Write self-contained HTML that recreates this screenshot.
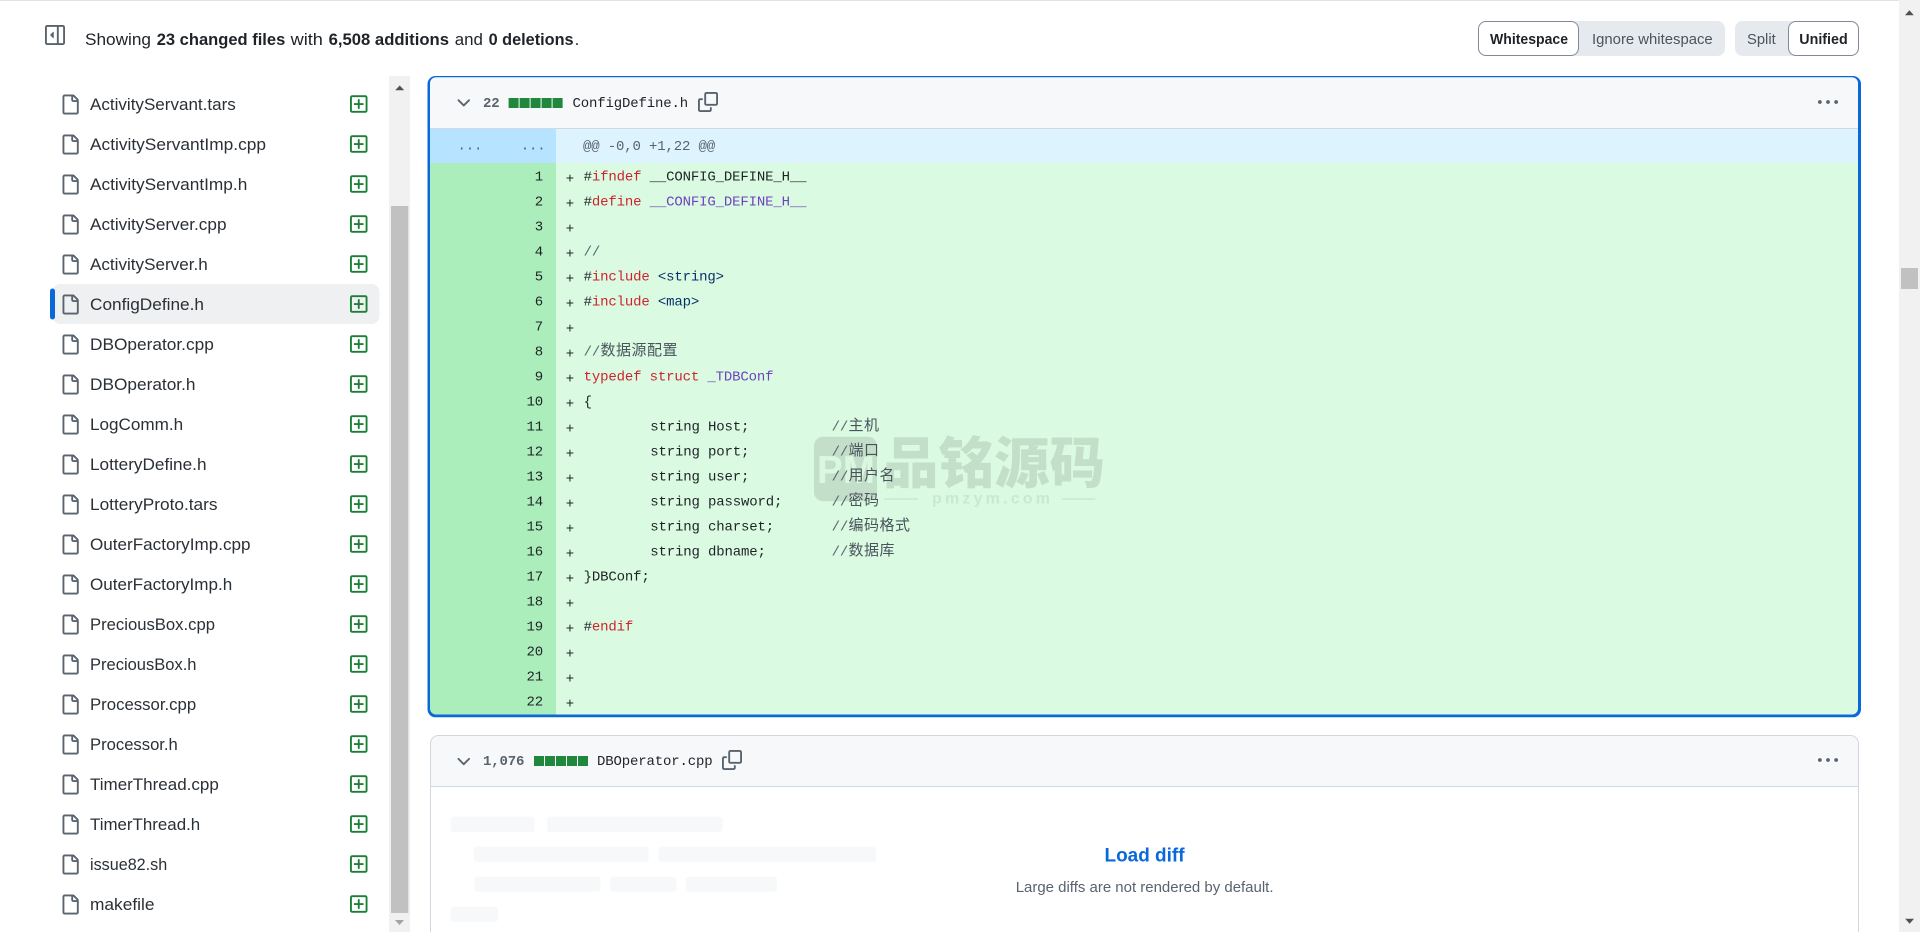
<!DOCTYPE html>
<html lang="en">
<head>
<meta charset="utf-8">
<title>Files changed</title>
<style>
html,body{margin:0;padding:0;background:#fff;overflow:hidden;width:1920px;height:932px}
svg{display:block;position:absolute;left:0;top:0}
.s{font-family:"Liberation Sans",sans-serif}
.f{font-size:17px;fill:#2a3036;transform:translate(-.5px,-1px)}
.h{font-size:17px;fill:#1f2328}
.b{font-weight:700}
.bt{font-size:15px;fill:#4b535d}
.m{font-family:"Liberation Mono",monospace;font-size:14px;letter-spacing:-.15px;fill:#1f2328;white-space:pre;transform:translateY(-1.5px)}
.n{text-anchor:end}
.r{fill:#cf222e}.p{fill:#6f42c1}.g{fill:#59636e}.v{fill:#0a3069}
.c{font-family:"Liberation Sans","Noto Sans CJK SC",sans-serif;font-size:15px;letter-spacing:.5px;fill:#4a535d;transform:translateY(-1px)}
</style>
</head>
<body>
<svg width="1920" height="932" viewBox="0 0 1920 932" xmlns="http://www.w3.org/2000/svg">
<defs>
<g id="file"><path fill="#59636e" transform="scale(1.25)" d="M2 1.75C2 .784 2.784 0 3.75 0h6.586c.464 0 .909.184 1.237.513l2.914 2.914c.329.328.513.773.513 1.237v9.586A1.75 1.75 0 0 1 13.25 16h-9.5A1.75 1.75 0 0 1 2 14.25Zm1.75-.25a.25.25 0 0 0-.25.25v12.5c0 .138.112.25.25.25h9.5a.25.25 0 0 0 .25-.25V6h-2.75A1.75 1.75 0 0 1 9 4.25V1.5Zm6.75.062V4.25c0 .138.112.25.25.25h2.688l-.011-.013-2.914-2.914-.013-.011Z"/></g>
<g id="add"><path fill="#1a7f37" transform="scale(1.25)" d="M2.75 1h10.5c.966 0 1.75.784 1.75 1.75v10.5A1.75 1.75 0 0 1 13.25 15H2.75A1.75 1.75 0 0 1 1 13.25V2.75C1 1.784 1.784 1 2.75 1Zm10.5 1.5H2.75a.25.25 0 0 0-.25.25v10.5c0 .138.112.25.25.25h10.5a.25.25 0 0 0 .25-.25V2.75a.25.25 0 0 0-.25-.25ZM8 4a.75.75 0 0 1 .75.75v2.5h2.5a.75.75 0 0 1 0 1.5h-2.5v2.5a.75.75 0 0 1-1.5 0v-2.5h-2.5a.75.75 0 0 1 0-1.5h2.5v-2.5A.75.75 0 0 1 8 4Z"/></g>
<g id="copy" fill="#59636e" transform="scale(1.25)"><path d="M0 6.75C0 5.784.784 5 1.75 5h1.5a.75.75 0 0 1 0 1.5h-1.5a.25.25 0 0 0-.25.25v7.5c0 .138.112.25.25.25h7.5a.25.25 0 0 0 .25-.25v-1.5a.75.75 0 0 1 1.5 0v1.5A1.75 1.75 0 0 1 9.25 16h-7.5A1.75 1.75 0 0 1 0 14.25Z"/><path d="M5 1.75C5 .784 5.784 0 6.75 0h7.5C15.216 0 16 .784 16 1.75v7.5A1.75 1.75 0 0 1 14.25 11h-7.5A1.75 1.75 0 0 1 5 9.25Zm1.75-.25a.25.25 0 0 0-.25.25v7.5c0 .138.112.25.25.25h7.5a.25.25 0 0 0 .25-.25v-7.5a.25.25 0 0 0-.25-.25Z"/></g>
<g id="chev"><path fill="#59636e" transform="scale(1.25)" d="M12.78 5.22a.749.749 0 0 1 0 1.06l-4.25 4.25a.749.749 0 0 1-1.06 0L3.22 6.28a.749.749 0 1 1 1.06-1.06L8 8.939l3.72-3.719a.749.749 0 0 1 1.06 0Z"/></g>
<g id="keb"><path fill="#59636e" transform="scale(1.25)" d="M8 9a1.5 1.5 0 1 0 0-3 1.5 1.5 0 0 0 0 3ZM1.5 9a1.5 1.5 0 1 0 0-3 1.5 1.5 0 0 0 0 3Zm13 0a1.5 1.5 0 1 0 0-3 1.5 1.5 0 0 0 0 3Z"/></g>
<g id="sq" fill="#1f883d"><rect x="0" width="10" height="10"/><rect x="11" width="10" height="10"/><rect x="22" width="10" height="10"/><rect x="33" width="10" height="10"/><rect x="44" width="10" height="10"/></g>
<clipPath id="inner"><path d="M436 77.3H1852a6 6 0 0 1 6 6V708.5a6 6 0 0 1-6 6H436a6 6 0 0 1-6-6V83.3a6 6 0 0 1 6-6Z"/></clipPath>
</defs>

<rect width="1920" height="932" fill="#fff"/>
<rect width="1920" height="1" fill="#e0e2e5"/>

<!-- toolbar -->
<g transform="translate(45 25)"><path fill="#59636e" transform="scale(1.25)" d="m4.177 7.823 2.396-2.396A.25.25 0 0 1 7 5.604v4.792a.25.25 0 0 1-.427.177L4.177 8.177a.25.25 0 0 1 0-.354ZM1.75 0h12.5C15.216 0 16 .784 16 1.75v12.5A1.75 1.75 0 0 1 14.25 16H1.75A1.75 1.75 0 0 1 0 14.25V1.75C0 .784.784 0 1.75 0ZM1.5 1.75v12.5c0 .138.112.25.25.25H9.5v-13H1.75a.25.25 0 0 0-.25.25ZM11 14.5h3.25a.25.25 0 0 0 .25-.25V1.75a.25.25 0 0 0-.25-.25H11Z"/></g>
<g class="s h">
<text class="s h" x="85" y="45" textLength="66" lengthAdjust="spacingAndGlyphs">Showing</text>
<text class="s h b" x="156.7" y="45" textLength="128.6" lengthAdjust="spacingAndGlyphs">23 changed files</text>
<text class="s h" x="290.6" y="45" textLength="32.3" lengthAdjust="spacingAndGlyphs">with</text>
<text class="s h b" x="328.6" y="45" textLength="120.4" lengthAdjust="spacingAndGlyphs">6,508 additions</text>
<text class="s h" x="454.7" y="45" textLength="28.2" lengthAdjust="spacingAndGlyphs">and</text>
<text class="s h b" x="488.6" y="45" textLength="85" lengthAdjust="spacingAndGlyphs">0 deletions</text>
<text class="s h" x="574.6" y="45">.</text>
</g>

<rect x="1478" y="21" width="247" height="35" rx="7.5" fill="#e6eaef"/>
<rect x="1478.5" y="21.5" width="100" height="34" rx="7.5" fill="#fff" stroke="#818b98"/>
<text class="s bt b" style="fill:#1f2328" x="1490" y="44" textLength="78" lengthAdjust="spacingAndGlyphs">Whitespace</text>
<text class="s bt" x="1592" y="44" textLength="120.7" lengthAdjust="spacingAndGlyphs">Ignore whitespace</text>
<rect x="1735" y="21" width="124" height="35" rx="7.5" fill="#e6eaef"/>
<rect x="1788.5" y="21.5" width="70" height="34" rx="7.5" fill="#fff" stroke="#818b98"/>
<text class="s bt" x="1747" y="44" textLength="28.7" lengthAdjust="spacingAndGlyphs">Split</text>
<text class="s bt b" style="fill:#1f2328" x="1799.3" y="44" textLength="48.4" lengthAdjust="spacingAndGlyphs">Unified</text>

<!-- file tree -->
<rect x="52.5" y="284" width="327" height="40" rx="8" fill="#eff0f2"/>
<rect x="50" y="288.5" width="5" height="31" rx="2.5" fill="#0969da"/>

<use href="#file" x="60" y="94.5"/><text class="s f" x="90.5" y="111" textLength="145.8" lengthAdjust="spacingAndGlyphs">ActivityServant.tars</text><use href="#add" x="348.75" y="94"/>
<use href="#file" x="60" y="134.5"/><text class="s f" x="90.5" y="151" textLength="176" lengthAdjust="spacingAndGlyphs">ActivityServantImp.cpp</text><use href="#add" x="348.75" y="134"/>
<use href="#file" x="60" y="174.5"/><text class="s f" x="90.5" y="191" textLength="157.3" lengthAdjust="spacingAndGlyphs">ActivityServantImp.h</text><use href="#add" x="348.75" y="174"/>
<use href="#file" x="60" y="214.5"/><text class="s f" x="90.5" y="231" textLength="136.5" lengthAdjust="spacingAndGlyphs">ActivityServer.cpp</text><use href="#add" x="348.75" y="214"/>
<use href="#file" x="60" y="254.5"/><text class="s f" x="90.5" y="271" textLength="117.7" lengthAdjust="spacingAndGlyphs">ActivityServer.h</text><use href="#add" x="348.75" y="254"/>
<use href="#file" x="60" y="294.5"/><text class="s f" x="90.5" y="311" textLength="114" lengthAdjust="spacingAndGlyphs">ConfigDefine.h</text><use href="#add" x="348.75" y="294"/>
<use href="#file" x="60" y="334.5"/><text class="s f" x="90.5" y="351" textLength="123.8" lengthAdjust="spacingAndGlyphs">DBOperator.cpp</text><use href="#add" x="348.75" y="334"/>
<use href="#file" x="60" y="374.5"/><text class="s f" x="90.5" y="391" textLength="105.5" lengthAdjust="spacingAndGlyphs">DBOperator.h</text><use href="#add" x="348.75" y="374"/>
<use href="#file" x="60" y="414.5"/><text class="s f" x="90.5" y="431" textLength="93.2" lengthAdjust="spacingAndGlyphs">LogComm.h</text><use href="#add" x="348.75" y="414"/>
<use href="#file" x="60" y="454.5"/><text class="s f" x="90.5" y="471" textLength="116.5" lengthAdjust="spacingAndGlyphs">LotteryDefine.h</text><use href="#add" x="348.75" y="454"/>
<use href="#file" x="60" y="494.5"/><text class="s f" x="90.5" y="511" textLength="127.5" lengthAdjust="spacingAndGlyphs">LotteryProto.tars</text><use href="#add" x="348.75" y="494"/>
<use href="#file" x="60" y="534.5"/><text class="s f" x="90.5" y="551" textLength="160.5" lengthAdjust="spacingAndGlyphs">OuterFactoryImp.cpp</text><use href="#add" x="348.75" y="534"/>
<use href="#file" x="60" y="574.5"/><text class="s f" x="90.5" y="591" textLength="142.2" lengthAdjust="spacingAndGlyphs">OuterFactoryImp.h</text><use href="#add" x="348.75" y="574"/>
<use href="#file" x="60" y="614.5"/><text class="s f" x="90.5" y="631" textLength="125" lengthAdjust="spacingAndGlyphs">PreciousBox.cpp</text><use href="#add" x="348.75" y="614"/>
<use href="#file" x="60" y="654.5"/><text class="s f" x="90.5" y="671" textLength="106.5" lengthAdjust="spacingAndGlyphs">PreciousBox.h</text><use href="#add" x="348.75" y="654"/>
<use href="#file" x="60" y="694.5"/><text class="s f" x="90.5" y="711" textLength="106.2" lengthAdjust="spacingAndGlyphs">Processor.cpp</text><use href="#add" x="348.75" y="694"/>
<use href="#file" x="60" y="734.5"/><text class="s f" x="90.5" y="751" textLength="87.8" lengthAdjust="spacingAndGlyphs">Processor.h</text><use href="#add" x="348.75" y="734"/>
<use href="#file" x="60" y="774.5"/><text class="s f" x="90.5" y="791" textLength="128.8" lengthAdjust="spacingAndGlyphs">TimerThread.cpp</text><use href="#add" x="348.75" y="774"/>
<use href="#file" x="60" y="814.5"/><text class="s f" x="90.5" y="831" textLength="110.2" lengthAdjust="spacingAndGlyphs">TimerThread.h</text><use href="#add" x="348.75" y="814"/>
<use href="#file" x="60" y="854.5"/><text class="s f" x="90.5" y="871" textLength="77.2" lengthAdjust="spacingAndGlyphs">issue82.sh</text><use href="#add" x="348.75" y="854"/>
<use href="#file" x="60" y="894.5"/><text class="s f" x="90.5" y="911" textLength="64.5" lengthAdjust="spacingAndGlyphs">makefile</text><use href="#add" x="348.75" y="894"/>

<!-- tree scrollbar -->
<rect x="389" y="76" width="21" height="856" fill="#f1f1f1"/>
<rect x="391" y="206" width="17.3" height="707" fill="#c1c1c1"/>
<path d="M395.2 90.3h9l-4.5-4.8Z" fill="#505050"/>
<path d="M395 920h9l-4.5 5Z" fill="#a3a3a3"/>

<!-- card 1 -->
<rect x="427.5" y="76" width="1433.5" height="641.3" rx="8" fill="#0969da"/>
<g clip-path="url(#inner)">
<rect x="430" y="77" width="1428" height="51" fill="#f6f8fa"/>
<rect x="430" y="128" width="1428" height="1" fill="#d1d9e0"/>
<rect x="430" y="129" width="126" height="34" fill="#b6e3ff"/>
<rect x="556" y="129" width="1302" height="34" fill="#ddf4ff"/>
<rect x="430" y="163" width="126" height="552" fill="#aceebb"/>
<rect x="556" y="163" width="1302" height="552" fill="#dafbe1"/>
</g>

<use href="#chev" x="453.75" y="93"/>
<text class="m b" style="fill:#59636e" x="483" y="108.3">22</text>
<use href="#sq" x="508.6" y="98"/>
<text class="m" x="572.5" y="108.3">ConfigDefine.h</text>
<use href="#copy" x="698" y="92"/>
<use href="#keb" x="1818" y="92.6"/>

<text class="m g" x="457.5" y="151">...</text>
<text class="m g" x="520.7" y="151">...</text>
<text class="m g" x="583" y="151.7">@@ -0,0 +1,22 @@</text>

<!-- watermark -->
<rect x="814" y="436.7" width="63" height="64.5" rx="9" fill="#c4dfc9"/>
<text class="s b" x="817" y="483" font-size="39" fill="#d9f8df" textLength="58" lengthAdjust="spacingAndGlyphs">PM</text>
<text x="883" y="483" font-family="'Noto Sans CJK SC',sans-serif" font-weight="900" font-size="55.5" fill="#c4dfc9">品铭源码</text>
<rect x="884" y="498.5" width="34" height="1" fill="#c4dfc9"/>
<rect x="1061.7" y="498.5" width="33.5" height="1" fill="#c4dfc9"/>
<text class="s b" x="932" y="503.5" font-size="16" fill="#cbe8d0" textLength="118">pmzym.com</text>

<!-- line numbers -->
<text class="m n" x="543" y="182">1</text>
<text class="m n" x="543" y="207">2</text>
<text class="m n" x="543" y="232">3</text>
<text class="m n" x="543" y="257">4</text>
<text class="m n" x="543" y="282">5</text>
<text class="m n" x="543" y="307">6</text>
<text class="m n" x="543" y="332">7</text>
<text class="m n" x="543" y="357">8</text>
<text class="m n" x="543" y="382">9</text>
<text class="m n" x="543" y="407">10</text>
<text class="m n" x="543" y="432">11</text>
<text class="m n" x="543" y="457">12</text>
<text class="m n" x="543" y="482">13</text>
<text class="m n" x="543" y="507">14</text>
<text class="m n" x="543" y="532">15</text>
<text class="m n" x="543" y="557">16</text>
<text class="m n" x="543" y="582">17</text>
<text class="m n" x="543" y="607">18</text>
<text class="m n" x="543" y="632">19</text>
<text class="m n" x="543" y="657">20</text>
<text class="m n" x="543" y="682">21</text>
<text class="m n" x="543" y="707">22</text>

<!-- plus markers -->
<text class="m" x="565.8" y="184">+</text>
<text class="m" x="565.8" y="209">+</text>
<text class="m" x="565.8" y="234">+</text>
<text class="m" x="565.8" y="259">+</text>
<text class="m" x="565.8" y="284">+</text>
<text class="m" x="565.8" y="309">+</text>
<text class="m" x="565.8" y="334">+</text>
<text class="m" x="565.8" y="359">+</text>
<text class="m" x="565.8" y="384">+</text>
<text class="m" x="565.8" y="409">+</text>
<text class="m" x="565.8" y="434">+</text>
<text class="m" x="565.8" y="459">+</text>
<text class="m" x="565.8" y="484">+</text>
<text class="m" x="565.8" y="509">+</text>
<text class="m" x="565.8" y="534">+</text>
<text class="m" x="565.8" y="559">+</text>
<text class="m" x="565.8" y="584">+</text>
<text class="m" x="565.8" y="609">+</text>
<text class="m" x="565.8" y="634">+</text>
<text class="m" x="565.8" y="659">+</text>
<text class="m" x="565.8" y="684">+</text>
<text class="m" x="565.8" y="709">+</text>

<!-- code -->
<text class="m" x="583.6" y="182">#<tspan class="r">ifndef</tspan> __CONFIG_DEFINE_H__</text>
<text class="m" x="583.6" y="207">#<tspan class="r">define</tspan> <tspan class="p">__CONFIG_DEFINE_H__</tspan></text>
<text class="m g" x="583.6" y="257">//</text>
<text class="m" x="583.6" y="282">#<tspan class="r">include</tspan> <tspan class="v">&lt;string&gt;</tspan></text>
<text class="m" x="583.6" y="307">#<tspan class="r">include</tspan> <tspan class="v">&lt;map&gt;</tspan></text>
<text class="m g" x="583.6" y="357">//</text><text class="c" x="600.5" y="356">数据源配置</text>
<text class="m" x="583.6" y="382"><tspan class="r">typedef</tspan> <tspan class="r">struct</tspan> <tspan class="p">_TDBConf</tspan></text>
<text class="m" x="583.6" y="407">{</text>
<text class="m" x="650.2" y="432">string Host;</text><text class="m g" x="831.6" y="432">//</text><text class="c" x="848.5" y="431">主机</text>
<text class="m" x="650.2" y="457">string port;</text><text class="m g" x="831.6" y="457">//</text><text class="c" x="848.5" y="456">端口</text>
<text class="m" x="650.2" y="482">string user;</text><text class="m g" x="831.6" y="482">//</text><text class="c" x="848.5" y="481">用户名</text>
<text class="m" x="650.2" y="507">string password;</text><text class="m g" x="831.6" y="507">//</text><text class="c" x="848.5" y="506">密码</text>
<text class="m" x="650.2" y="532">string charset;</text><text class="m g" x="831.6" y="532">//</text><text class="c" x="848.5" y="531">编码格式</text>
<text class="m" x="650.2" y="557">string dbname;</text><text class="m g" x="831.6" y="557">//</text><text class="c" x="848.5" y="556">数据库</text>
<text class="m" x="583.6" y="582">}DBConf;</text>
<text class="m" x="583.6" y="632">#<tspan class="r">endif</tspan></text>

<!-- card 2 -->
<path d="M431 786.5V743a7.5 7.5 0 0 1 7.5-7.5H1851a7.5 7.5 0 0 1 7.5 7.5V786.5Z" fill="#f6f8fa"/>
<path d="M430.5 932V743.5a8 8 0 0 1 8-8H1850.5a8 8 0 0 1 8 8V932" fill="none" stroke="#d1d9e0"/>
<rect x="431" y="786" width="1427" height="1" fill="#d1d9e0"/>
<use href="#chev" x="453.75" y="751.7"/>
<text class="m b" style="fill:#59636e" x="483" y="766.7">1,076</text>
<use href="#sq" x="534" y="756"/>
<text class="m" x="597" y="766.7">DBOperator.cpp</text>
<use href="#copy" x="722" y="750"/>
<use href="#keb" x="1818" y="750.6"/>

<g fill="#f6f8fa">
<rect x="450.7" y="816.7" width="84" height="15.3" rx="3"/>
<rect x="547" y="816.7" width="175.5" height="15.3" rx="3"/>
<rect x="473.6" y="846.7" width="175" height="15.3" rx="3"/>
<rect x="658.6" y="846.7" width="217.4" height="15.3" rx="3"/>
<rect x="474.6" y="876.7" width="126" height="15" rx="3"/>
<rect x="610" y="876.7" width="66.4" height="15" rx="3"/>
<rect x="685.7" y="876.7" width="91.3" height="15" rx="3"/>
<rect x="450.7" y="906.7" width="47.3" height="15" rx="3"/>
</g>

<text class="s b" x="1104.5" y="861.7" font-size="19" fill="#0969da" textLength="80" lengthAdjust="spacingAndGlyphs">Load diff</text>
<text class="s" x="1015.7" y="892" font-size="15" fill="#59636e" textLength="257.8" lengthAdjust="spacingAndGlyphs">Large diffs are not rendered by default.</text>

<!-- page scrollbar -->
<rect x="1899" y="0" width="21" height="932" fill="#f1f1f1"/>
<rect x="1901" y="268" width="17" height="21" fill="#c1c1c1"/>
<path d="M1905 15.3h8.8l-4.4-5Z" fill="#505050"/>
<path d="M1905.2 918.8h8.8l-4.4 5Z" fill="#505050"/>
</svg>
</body>
</html>
